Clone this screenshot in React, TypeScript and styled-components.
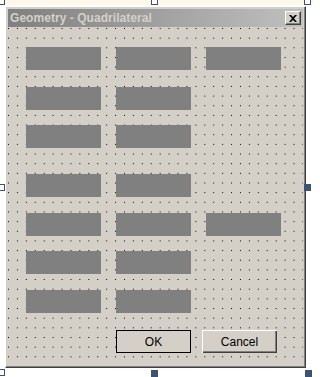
import React from 'react'
import styled, { createGlobalStyle, css } from 'styled-components'

const GlobalStyle = createGlobalStyle`
  html, body {
    margin: 0;
    padding: 0;
    background: #ffffff;
  }
  body {
    font-family: 'Liberation Sans', Arial, sans-serif;
    font-size: 11px;
  }
`

// designer canvas that hosts the form being edited
const Stage = styled.div`
  position: relative;
  width: 313px;
  height: 377px;
  overflow: hidden;
  background: linear-gradient(#fdf8e9 0 5px, #ffffff 5px);
  padding: 6px 0 0 5px;
  box-sizing: border-box;
`

const Window = styled.div`
  width: 301px;
  height: 362px;
  box-sizing: border-box;
  display: flex;
  flex-direction: column;
  padding: 2px;
  background: #d4d0c8;
  border-top: 1px solid #ffffff;
  border-left: 1px solid #ffffff;
  border-right: 1px solid #404040;
  border-bottom: 1px solid #404040;
  box-shadow: inset -1px -1px 0 #808080, inset 1px 1px 0 #d4d0c8;
`

const TitleBar = styled.div`
  height: 18px;
  flex: none;
  display: flex;
  align-items: center;
  justify-content: space-between;
  padding: 0 2px 0 2px;
  background: linear-gradient(to right, #808080, #c0c0c0);
`

const Caption = styled.span`
  font-family: 'Liberation Sans', Arial, sans-serif;
  font-weight: bold;
  font-size: 12px;
  color: #d4d0c8;
  white-space: nowrap;
  letter-spacing: 0.05px;
`

const CloseButton = styled.div`
  width: 16px;
  height: 14px;
  box-sizing: border-box;
  display: flex;
  align-items: center;
  justify-content: center;
  background: #d4d0c8;
  border-top: 1px solid #ffffff;
  border-left: 1px solid #ffffff;
  border-right: 1px solid #404040;
  border-bottom: 1px solid #404040;
  box-shadow: inset -1px -1px 0 #808080;
`

// form client area with the design grid dots
const Body = styled.div`
  flex: 1;
  display: flex;
  flex-direction: column;
  padding: 0 0 0 18px;
  background-color: #d4d0c8;
  background-image: conic-gradient(from 270deg at 1px 1px, #000 90deg, transparent 0);
  background-size: 8.93px 9.67px;
  background-position: 0px 1px;
`

const Row = styled.div<{ $top: number }>`
  display: flex;
  gap: 15px;
  margin-top: ${({ $top }) => $top}px;
`

const Placeholder = styled.div`
  width: 75px;
  height: 23px;
  background: #808080;
`

const ButtonRow = styled.div`
  display: flex;
  gap: 11px;
  margin-top: 17px;
  margin-left: 90px;
`

const Button = styled.button<{ $default?: boolean }>`
  width: 75px;
  height: 23px;
  box-sizing: border-box;
  padding: 0;
  margin: 0;
  font-family: 'Liberation Sans', Arial, sans-serif;
  font-size: 12px;
  color: #000;
  background: #d4d0c8;
  border: none;
  ${({ $default }) =>
    $default
      ? css`
          outline: 1px solid #000;
          outline-offset: -1px;
          box-shadow: inset 2px 2px 0 -1px #ffffff, inset -2px -2px 0 -1px #808080,
            inset 0 0 0 1px #000;
        `
      : css`
          box-shadow: inset 1px 1px 0 #ffffff, inset -1px -1px 0 #404040,
            inset -2px -2px 0 #808080;
        `}
`

const Handle = styled.div<{ $x: number; $y: number; $filled?: boolean }>`
  position: absolute;
  left: ${({ $x }) => $x}px;
  top: ${({ $y }) => $y}px;
  width: 7px;
  height: 7px;
  box-sizing: border-box;
  border: 1px solid #3d5373;
  background: ${({ $filled }) => ($filled ? '#3d5373' : '#ffffff')};
`

const rows: { top: number; count: number }[] = [
  { top: 20, count: 3 },
  { top: 17, count: 2 },
  { top: 15, count: 2 },
  { top: 26, count: 2 },
  { top: 16, count: 3 },
  { top: 15, count: 2 },
  { top: 16, count: 2 },
]

const CloseGlyph = () => (
  <svg width="8" height="7" viewBox="0 0 8 7">
    <path d="M0 0h2l2 2 2-2h2L5 3.5 8 7H6L4 5 2 7H0l3-3.5z" fill="#000" />
  </svg>
)

export default function App() {
  return (
    <>
      <GlobalStyle />
      <Stage>
        <Window>
          <TitleBar>
            <Caption>Geometry - Quadrilateral</Caption>
            <CloseButton>
              <CloseGlyph />
            </CloseButton>
          </TitleBar>
          <Body>
            {rows.map((r, i) => (
              <Row key={i} $top={r.top}>
                {Array.from({ length: r.count }).map((_, j) => (
                  <Placeholder key={j} />
                ))}
              </Row>
            ))}
            <ButtonRow>
              <Button $default>OK</Button>
              <Button>Cancel</Button>
            </ButtonRow>
          </Body>
        </Window>
        <Handle $x={-2} $y={-2} />
        <Handle $x={151} $y={-2} />
        <Handle $x={304} $y={-2} />
        <Handle $x={-2} $y={184} />
        <Handle $x={304} $y={184} $filled />
        <Handle $x={-2} $y={369} />
        <Handle $x={151} $y={370} $filled />
        <Handle $x={305} $y={370} $filled />
      </Stage>
    </>
  )
}
